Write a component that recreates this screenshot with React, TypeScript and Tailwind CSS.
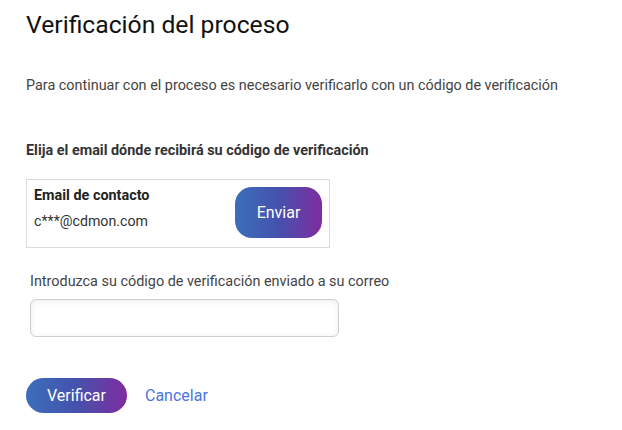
import React from 'react';

export default function App() {
  return (
    <div className="min-h-screen bg-white font-['Roboto',sans-serif] text-[#222]">
      <div className="px-[26px] pt-[10px]">
        {/* Title */}
        <h1 className="text-[24.7px] leading-[30px] font-normal text-[#111]">Verificación del proceso</h1>

        <p className="mt-[37px] text-[14.4px] leading-[18px] text-[#444]">
          Para continuar con el proceso es necesario verificarlo con un código de verificación
        </p>

        <p className="mt-[47px] text-[14.4px] leading-[18px] font-bold text-[#333]">
          Elija el email dónde recibirá su código de verificación
        </p>

        {/* Email card */}
        <div className="mt-[19px] w-[304px] h-[69px] border border-[#dcdcdc] flex items-start justify-between pl-[7px] pr-[7px] pt-[7px]">
          <div className="flex flex-col">
            <span className="text-[14.4px] leading-[18px] font-bold text-[#222]">Email de contacto</span>
            <span className="mt-[7px] text-[14.2px] leading-[18px] text-[#333]">c***@cdmon.com</span>
          </div>
          <button className="w-[87px] h-[51px] rounded-[17px] bg-[linear-gradient(90deg,#3b6ebb_0%,#4552ad_50%,#7f2c9f_100%)] text-white text-[16px]">
            Enviar
          </button>
        </div>

        {/* Code input */}
        <div className="mt-[25px] pl-[4px]">
          <label className="block text-[14.4px] leading-[18px] text-[#444]">
            Introduzca su código de verificación enviado a su correo
          </label>
          <input
            type="text"
            className="mt-[8px] w-[309px] h-[38px] rounded-[6px] border border-[#cfcfcf] shadow-[inset_0_1px_6px_rgba(0,0,0,0.08)] outline-none px-2 text-[14px]"
          />
        </div>

        {/* Actions */}
        <div className="mt-[41px] flex items-center gap-[18px]">
          <button className="w-[101px] h-[35px] rounded-full bg-[linear-gradient(90deg,#3b6ebb_0%,#4552ad_50%,#7f2c9f_100%)] text-white text-[16px]">
            Verificar
          </button>
          <button className="text-[16px] text-[#4a74e0]">Cancelar</button>
        </div>
      </div>
    </div>
  );
}
